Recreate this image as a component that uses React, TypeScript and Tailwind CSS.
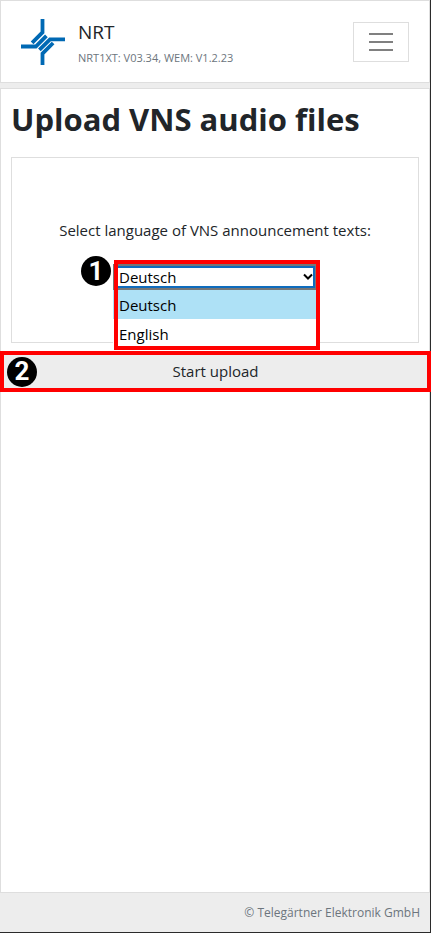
import { useState } from "react";

const languages = ["Deutsch", "English"];

function Logo() {
  return (
    <svg className="h-[46px] w-11" viewBox="0 0 44 46" fill="none" stroke="#0069b4" strokeWidth="3.8">
      <path d="M21.5 0v13.4L11.1 23.8" />
      <path d="M0 27.5h14.8L25.4 16.9" />
      <path d="M44 20.3H29L18.4 30.9" />
      <path d="M21.5 46V34.6L32.1 24" />
    </svg>
  );
}

function Marker({ label }: { label: string }) {
  return (
    <span className="flex h-[30px] w-[30px] items-center justify-center rounded-full bg-black font-[Roboto,sans-serif] text-[26px] font-bold text-white">
      {label}
    </span>
  );
}

function Header() {
  return (
    <header className="flex h-[83px] items-center border border-[#dedede] bg-white px-5">
      <Logo />
      <div className="ml-[13px] flex-1 pt-1">
        <div className="text-[19px] leading-7">NRT</div>
        <div className="text-[11px] leading-6 text-[#6c757d]">NRT1XT: V03.34, WEM: V1.2.23</div>
      </div>
      <button
        type="button"
        aria-label="Menu"
        className="flex h-10 w-14 flex-col items-center justify-center gap-1.5 border border-[#dedede]"
      >
        <span className="h-0.5 w-6 bg-[#808080]" />
        <span className="h-0.5 w-6 bg-[#808080]" />
        <span className="h-0.5 w-6 bg-[#808080]" />
      </button>
    </header>
  );
}

export default function App() {
  const [language, setLanguage] = useState("Deutsch");

  return (
    <div className="flex min-h-screen flex-col border-r border-b border-[#2b2b2b] bg-[#ededed] font-['Open_Sans',sans-serif] text-[#212529]">
      <Header />

      <main className="mt-[5px] flex-1 border border-[#dedede] bg-white">
        <h1 className="mx-2.5 mt-2.5 mb-[18px] text-[31px] leading-10 font-bold">Upload VNS audio files</h1>

        <section className="mx-2.5 flex flex-col items-center border border-[#dedede] pt-[60px] pb-[52px]">
          <label htmlFor="language" className="text-[15px] leading-6">
            Select language of VNS announcement texts:
          </label>

          <div className="relative mt-[22px] w-[204px]">
            <select
              id="language"
              value={language}
              onChange={(e) => setLanguage(e.target.value)}
              className="block h-[26px] w-full appearance-none border-2 border-[#767676] bg-white px-1 text-[15px] leading-5 text-black ring-2 ring-[#0f6cbd] outline-none ring-inset"
            >
              {languages.map((item) => (
                <option key={item}>{item}</option>
              ))}
            </select>
            <svg className="pointer-events-none absolute top-[9px] right-1 h-2 w-2.5" viewBox="0 0 10 8" fill="none" stroke="#000" strokeWidth="2">
              <path d="M1 1.5l4 4 4-4" />
            </svg>

            {/* Opened option list */}
            <ul className="absolute top-full left-0 z-10 w-full bg-white text-[15px] leading-7 text-black">
              {languages.map((item) => (
                <li key={item} className={item === language ? "bg-[#aee1f6] px-1.5 pt-px" : "px-1.5 pt-px"}>
                  {item}
                </li>
              ))}
            </ul>

            <div className="pointer-events-none absolute -top-1 -right-[3px] left-px z-20 h-[90px] border-4 border-[#ff0000]" />
            <div className="absolute -top-2 -left-8">
              <Marker label="1" />
            </div>
          </div>
        </section>

        <div className="relative mt-2 -mr-0.5 -ml-px">
          <button type="button" className="block h-[41px] w-full border-4 border-[#ff0000] bg-[#ededed] text-[15px]">
            Start upload
          </button>
          <div className="pointer-events-none absolute inset-y-0 left-[7px] flex items-center">
            <Marker label="2" />
          </div>
        </div>
      </main>

      <footer className="px-2.5 pt-2 pb-[7px] text-right text-xs leading-6 text-[#6c757d]">
        © Telegärtner Elektronik GmbH
      </footer>
    </div>
  );
}
